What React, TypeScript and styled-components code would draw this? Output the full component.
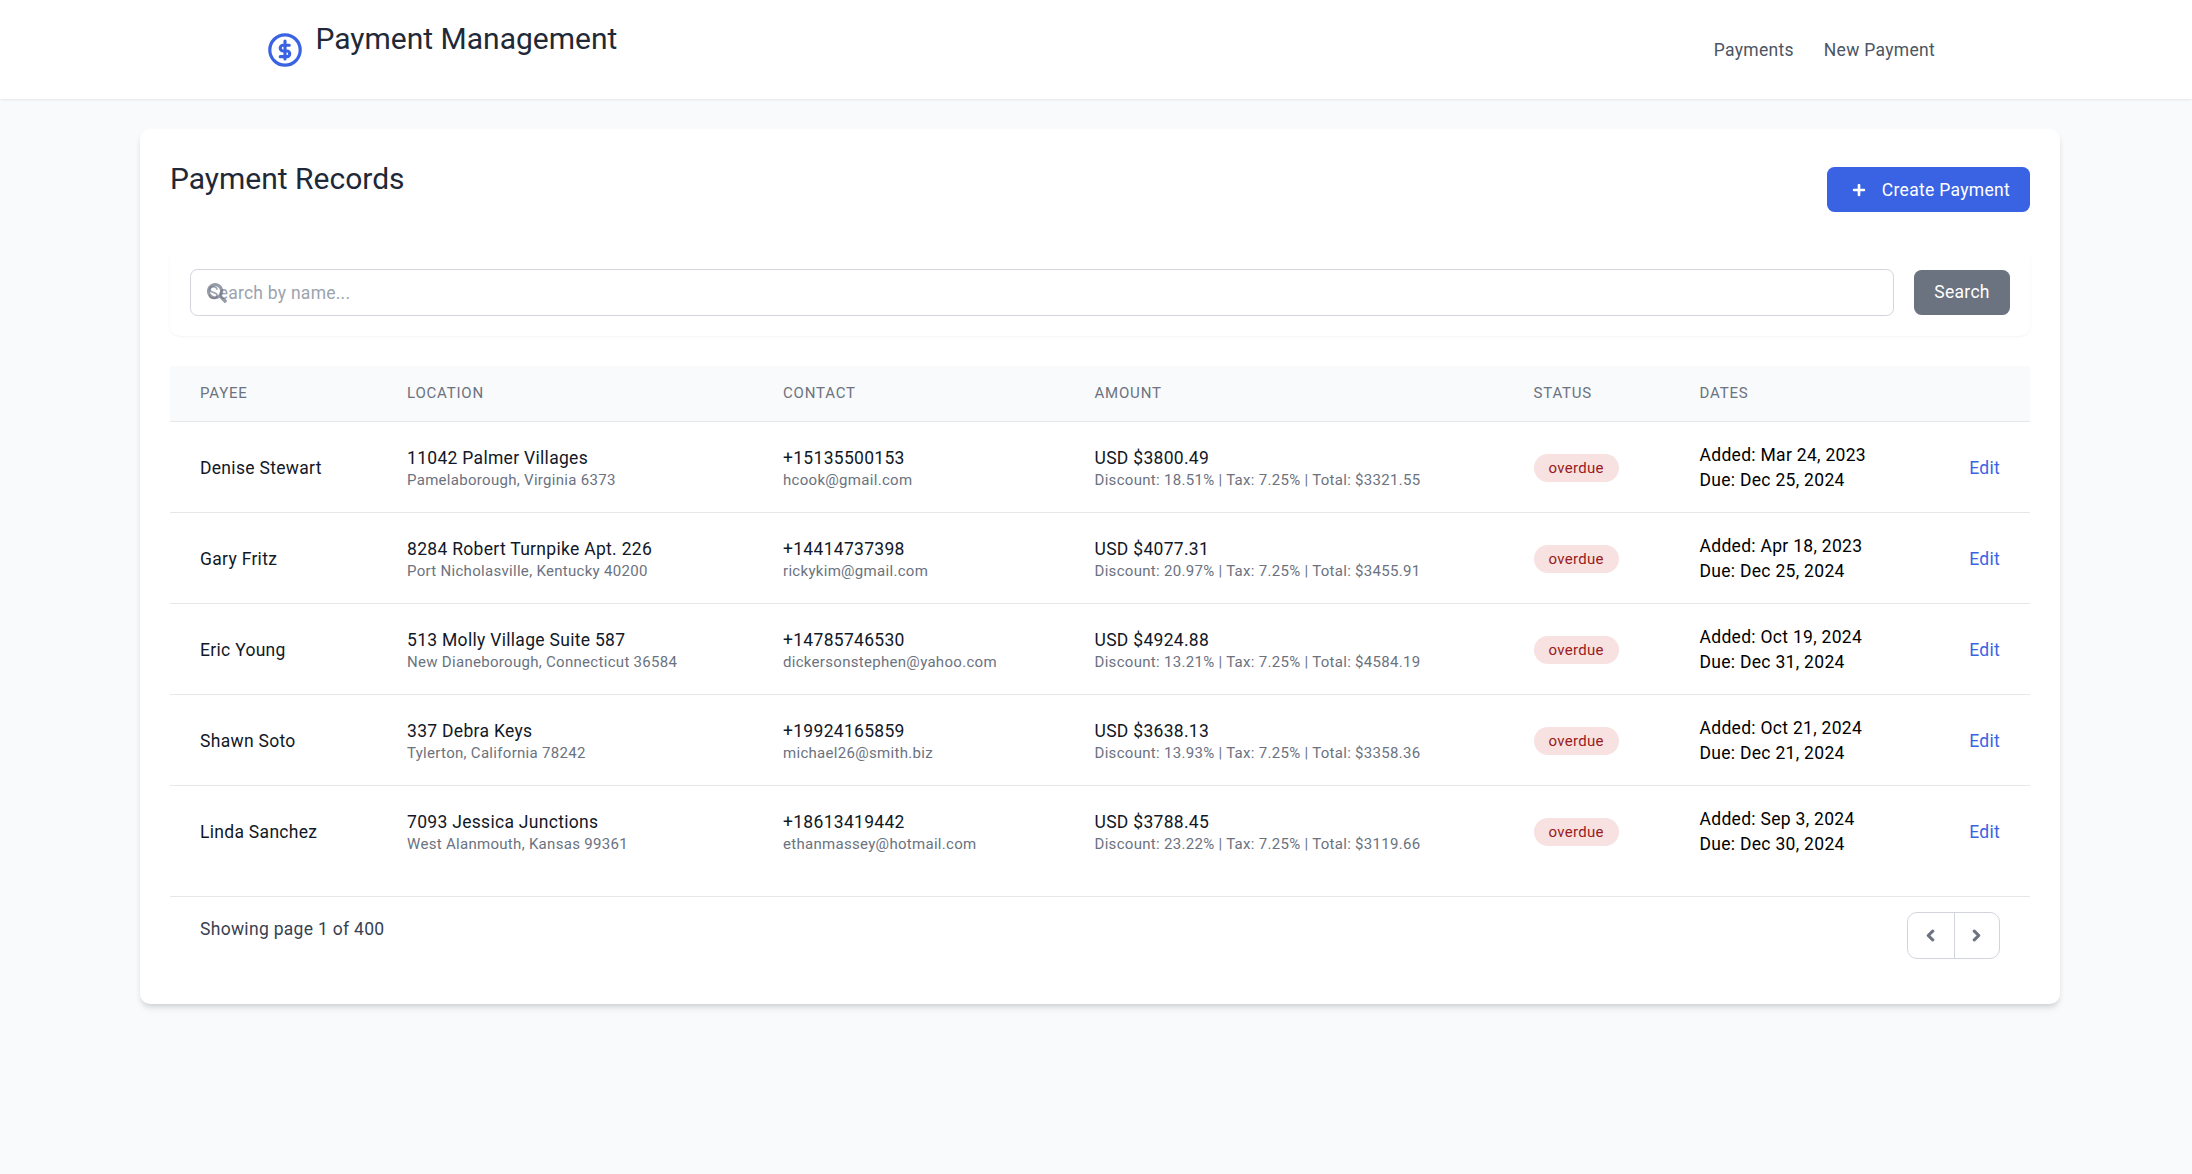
import React from "react";
import styled, { createGlobalStyle } from "styled-components";
import { FaChevronLeft, FaChevronRight, FaPlus, FaSearch } from "react-icons/fa";

const Global = createGlobalStyle`
  html, body { margin: 0; padding: 0; background: #f9fafb; }
  body { font-family: Roboto, "Liberation Sans", sans-serif; font-size: 17.5px; line-height: 25px; letter-spacing: 0.3px; color: #111827; min-height: 1174px; }
  * { box-sizing: border-box; }
`;

const Header = styled.header`
  height: 99px;
  background: #fff;
  box-shadow: 0 1px 2.5px rgba(0, 0, 0, 0.08);
  display: flex;
  align-items: center;
  justify-content: space-between;
  padding: 0 257px 0 268px;
`;
const Brand = styled.div`
  display: flex;
  align-items: center;
  gap: 13.5px;
`;
const AppTitle = styled.h1`
  margin: 0 0 22px;
  font-size: 30px;
  line-height: 40px;
  font-weight: 400;
  letter-spacing: 0;
  color: #1f2937;
`;
const Nav = styled.nav`
  display: flex;
  gap: 30px;
  padding-top: 1px;
`;
const NavLink = styled.a`
  color: #4b5563;
  font-size: 17.5px;
  line-height: 25px;
`;
const Main = styled.main`
  padding: 30px 132px 0 140px;
`;
const Card = styled.section`
  background: #fff;
  border-radius: 10px;
  box-shadow: 0 5px 7.5px -1px rgba(0, 0, 0, 0.1), 0 2.5px 5px -2px rgba(0, 0, 0, 0.1);
  padding: 30px;
  width: 1920px;
`;
const TitleRow = styled.div`
  display: flex;
  align-items: center;
  justify-content: space-between;
  margin-bottom: 30px;
`;
const PageTitle = styled.h2`
  margin: 0 0 20px;
  font-size: 30px;
  line-height: 40px;
  font-weight: 400;
  letter-spacing: 0;
  color: #1f2937;
`;
const PrimaryButton = styled.button`
  display: flex;
  align-items: center;
  height: 45px;
  padding: 2.5px 20px 0;
  border: 0;
  border-radius: 7.5px;
  background: #3a63e3;
  color: #fff;
  font: 400 17.5px/25px Roboto, sans-serif;
  letter-spacing: 0.3px;
`;
const PlusBox = styled.span`
  width: 25px;
  margin-right: 10px;
  display: flex;
  justify-content: center;
`;
const SearchPanel = styled.div`
  display: flex;
  align-items: center;
  gap: 20px;
  padding: 20px;
  margin-bottom: 30px;
  border-radius: 10px;
  background: #fff;
  box-shadow: 0 1px 2.5px rgba(0, 0, 0, 0.05);
`;
const SearchField = styled.div`
  position: relative;
  flex: 1;
  display: flex;
`;
const SearchGlyph = styled.span`
  position: absolute;
  left: 17px;
  top: 14px;
  display: flex;
  color: #6b7280;
  opacity: 0.7;
`;
const SearchInput = styled.input`
  flex: 1;
  height: 47px;
  padding: 0 17px;
  border: 1.25px solid #d1d5db;
  border-radius: 7.5px;
  background: #fff;
  font: 400 17.5px/25px Roboto, sans-serif;
  letter-spacing: 0.25px;
  &::placeholder { color: #9ca3af; opacity: 1; }
`;
const GrayButton = styled.button`
  height: 45px;
  width: 96px;
  border: 0;
  border-radius: 7.5px;
  background: #6b7280;
  color: #fff;
  font: 400 17.5px/25px Roboto, sans-serif;
  letter-spacing: 0.3px;
`;
const Table = styled.table`
  width: 1860px;
  table-layout: fixed;
  border-collapse: collapse;
`;
const HeadCell = styled.th<{ $w?: number }>`
  width: ${(p) => (p.$w ? `${p.$w}px` : "auto")};
  padding: 17px 30px 18px;
  background: #f9fafb;
  border-bottom: 1px solid #e5e7eb;
  text-align: left;
  font-size: 15px;
  line-height: 20px;
  font-weight: 400;
  letter-spacing: 0.8px;
  text-transform: uppercase;
  color: #6b7280;
`;
const Row = styled.tr`
  border-bottom: 1px solid #e5e7eb;
  &:last-child { border-bottom: 0; }
`;
const Cell = styled.td`
  padding: 20px 30px;
  vertical-align: middle;
`;
const Name = styled.div`
  padding-top: 2.5px;
  color: #111827;
`;
const Primary = styled.div`
  padding-top: 1px;
  margin-bottom: -1px;
  color: #111827;
`;
const Secondary = styled.div`
  font-size: 15px;
  line-height: 20px;
  color: #6b7280;
  white-space: nowrap;
`;
const Badge = styled.span`
  display: block;
  width: fit-content;
  margin-top: 2px;
  padding: 4px 15px;
  border-radius: 999px;
  background: #f8e1e1;
  color: #991b1b;
  font-size: 15px;
  line-height: 20px;
`;
const Dates = styled.div`
  padding-top: 1px;
  margin-bottom: -1px;
  color: #000;
  white-space: nowrap;
`;
const EditLink = styled.a`
  display: block;
  padding-top: 2.5px;
  text-align: right;
  color: #3a63e3;
`;
const Footer = styled.div`
  margin-top: 20px;
  border-top: 1px solid #e5e7eb;
  display: flex;
  justify-content: space-between;
  align-items: flex-start;
  padding: 15px 30px;
`;
const PageInfo = styled.div`
  padding-top: 5px;
  color: #374151;
`;
const Pager = styled.div`
  display: flex;
  height: 47px;
  border: 1.25px solid #d1d5db;
  border-radius: 10px;
`;
const PagerButton = styled.button`
  width: 45.5px;
  border: 0;
  background: transparent;
  color: #6b7280;
  display: flex;
  align-items: center;
  justify-content: center;
  & + & { border-left: 1.25px solid #d1d5db; }
`;

const rows = [
  ["Denise Stewart", "11042 Palmer Villages", "Pamelaborough, Virginia 6373", "+15135500153", "hcook@gmail.com", "USD $3800.49", "Discount: 18.51% | Tax: 7.25% | Total: $3321.55", "Added: Mar 24, 2023", "Due: Dec 25, 2024"],
  ["Gary Fritz", "8284 Robert Turnpike Apt. 226", "Port Nicholasville, Kentucky 40200", "+14414737398", "rickykim@gmail.com", "USD $4077.31", "Discount: 20.97% | Tax: 7.25% | Total: $3455.91", "Added: Apr 18, 2023", "Due: Dec 25, 2024"],
  ["Eric Young", "513 Molly Village Suite 587", "New Dianeborough, Connecticut 36584", "+14785746530", "dickersonstephen@yahoo.com", "USD $4924.88", "Discount: 13.21% | Tax: 7.25% | Total: $4584.19", "Added: Oct 19, 2024", "Due: Dec 31, 2024"],
  ["Shawn Soto", "337 Debra Keys", "Tylerton, California 78242", "+19924165859", "michael26@smith.biz", "USD $3638.13", "Discount: 13.93% | Tax: 7.25% | Total: $3358.36", "Added: Oct 21, 2024", "Due: Dec 21, 2024"],
  ["Linda Sanchez", "7093 Jessica Junctions", "West Alanmouth, Kansas 99361", "+18613419442", "ethanmassey@hotmail.com", "USD $3788.45", "Discount: 23.22% | Tax: 7.25% | Total: $3119.66", "Added: Sep 3, 2024", "Due: Dec 30, 2024"],
];

const columns: [string, number | undefined][] = [
  ["Payee", 207],
  ["Location", 376],
  ["Contact", 311.5],
  ["Amount", 439],
  ["Status", 166],
  ["Dates", 269],
  ["", undefined],
];

function Logo() {
  return (
    <svg width="34" height="34" viewBox="0 0 34 34" fill="none" stroke="#3a63e3">
      <circle cx="17" cy="17" r="15.2" strokeWidth="3.2" />
      <g transform="translate(5.6 5.6) scale(0.95)" strokeWidth="3.3" strokeLinecap="round" strokeLinejoin="round">
        <path d="M12 2.5v19" />
        <path d="M16.5 7H10a3 3 0 0 0 0 6h4a3 3 0 0 1 0 6H7" />
      </g>
    </svg>
  );
}

export default function App() {
  return (
    <>
      <Global />
      <Header>
        <Brand>
          <Logo />
          <AppTitle>Payment Management</AppTitle>
        </Brand>
        <Nav>
          <NavLink>Payments</NavLink>
          <NavLink>New Payment</NavLink>
        </Nav>
      </Header>
      <Main>
        <Card>
          <TitleRow>
            <PageTitle>Payment Records</PageTitle>
            <PrimaryButton>
              <PlusBox><FaPlus size={14} /></PlusBox>
              Create Payment
            </PrimaryButton>
          </TitleRow>
          <SearchPanel>
            <SearchField>
              <SearchInput placeholder="Search by name..." />
              <SearchGlyph><FaSearch size={20} /></SearchGlyph>
            </SearchField>
            <GrayButton>Search</GrayButton>
          </SearchPanel>
          <Table>
            <thead>
              <tr>
                {columns.map(([label, w]) => (
                  <HeadCell key={label} $w={w}>{label}</HeadCell>
                ))}
              </tr>
            </thead>
            <tbody>
              {rows.map((r) => (
                <Row key={r[0]}>
                  <Cell><Name>{r[0]}</Name></Cell>
                  <Cell><Primary>{r[1]}</Primary><Secondary>{r[2]}</Secondary></Cell>
                  <Cell><Primary>{r[3]}</Primary><Secondary>{r[4]}</Secondary></Cell>
                  <Cell><Primary>{r[5]}</Primary><Secondary>{r[6]}</Secondary></Cell>
                  <Cell><Badge>overdue</Badge></Cell>
                  <Cell><Dates>{r[7]}<br />{r[8]}</Dates></Cell>
                  <Cell><EditLink>Edit</EditLink></Cell>
                </Row>
              ))}
            </tbody>
          </Table>
          <Footer>
            <PageInfo>Showing page 1 of 400</PageInfo>
            <Pager>
              <PagerButton><FaChevronLeft size={13} stroke="currentColor" strokeWidth={40} /></PagerButton>
              <PagerButton><FaChevronRight size={13} stroke="currentColor" strokeWidth={40} /></PagerButton>
            </Pager>
          </Footer>
        </Card>
      </Main>
    </>
  );
}
